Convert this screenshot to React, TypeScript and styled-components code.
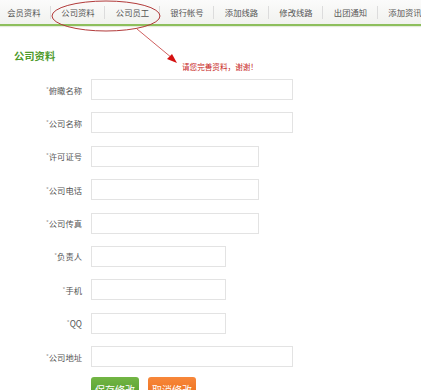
import styled, { createGlobalStyle } from "styled-components";

// Seitenbasis
const GlobalStyle = createGlobalStyle`
  html, body {
    margin: 0;
    padding: 0;
    background: #ffffff;
    font-family: "Noto Sans CJK SC", "Liberation Sans", sans-serif;
  }
`;

const tabs = ["会员资料", "公司资料", "公司员工", "银行帐号", "添加线路", "修改线路", "出团通知", "添加资讯"];

interface Field {
  label: string;
  width: number;
}

const fields: Field[] = [
  { label: "俯瞰名称", width: 202 },
  { label: "公司名称", width: 202 },
  { label: "许可证号", width: 168 },
  { label: "公司电话", width: 168 },
  { label: "公司传真", width: 168 },
  { label: "负责人", width: 135 },
  { label: "手机", width: 135 },
  { label: "QQ", width: 135 },
  { label: "公司地址", width: 202 },
];

const App = () => {
  return (
    <>
      <GlobalStyle />
      <Page>
        <NavBar>
          {tabs.map((t, i) => (
            <Tab key={t} first={i === 0}>
              {t}
            </Tab>
          ))}
        </NavBar>

        <Heading>公司资料</Heading>

        <Form>
          {fields.map((f) => (
            <Row key={f.label}>
              <Label>
                <Star>*</Star>
                {f.label}
              </Label>
              <Input w={f.width} />
            </Row>
          ))}
          <Row>
            <span />
            <Buttons>
              <Button tone="green">保存修改</Button>
              <Button tone="orange">取消修改</Button>
            </Buttons>
          </Row>
        </Form>

        {/* Markierung: Ellipse um die Tabs und Pfeil zum Hinweis */}
        <Marker width="421" height="80" viewBox="0 0 421 80">
          <ellipse cx="106" cy="16" rx="54" ry="15" fill="none" stroke="#b23a3a" strokeWidth="1" />
          <line x1="137" y1="29" x2="172" y2="58" stroke="#d06060" strokeWidth="1" />
          <polygon points="177,63 167,59 172,54" fill="#d41010" />
        </Marker>
        <Hint>请您完善资料，谢谢！</Hint>
      </Page>
    </>
  );
};

const Page = styled.div`
  position: relative;
  width: 421px;
  height: 390px;
  overflow: hidden;
`;

const NavBar = styled.div`
  display: flex;
  height: 24px;
  background: linear-gradient(#fbfbfb, #f1f2ef);
  border-bottom: 2px solid #8dbf5c;
  box-shadow: 0 1px 1px #e4ebdc;
`;

const Tab = styled.div<{ first?: boolean }>`
  flex: none;
  width: ${(p) => (p.first ? "50.7px" : "54.5px")};
  display: flex;
  align-items: center;
  justify-content: center;
  padding-right: ${(p) => (p.first ? "3px" : "0")};
  box-sizing: border-box;
  font-size: 8.3px;
  color: #555;
  position: relative;

  &::after {
    content: "";
    position: absolute;
    right: 0;
    top: 6px;
    bottom: 5px;
    width: 1px;
    background: #dcdcdc;
  }
`;

const Heading = styled.div`
  margin: 24px 0 0 14px;
  height: 12px;
  line-height: 12px;
  font-size: 10.3px;
  font-weight: bold;
  color: #4d9a2c;
`;

const Form = styled.div`
  display: flex;
  flex-direction: column;
  gap: 12.4px;
  margin-top: 17px;
`;

const Row = styled.div`
  display: grid;
  grid-template-columns: 82px auto;
  column-gap: 9px;
  align-items: center;
`;

const Label = styled.div`
  text-align: right;
  font-size: 8.3px;
  color: #555;
`;

const Star = styled.span`
  font-size: 6px;
  color: #999;
  vertical-align: 2px;
`;

const Input = styled.div<{ w: number }>`
  width: ${(p) => p.w}px;
  height: 21px;
  box-sizing: border-box;
  border: 1px solid #e3e3e3;
  background: #fff;
`;

const Buttons = styled.div`
  display: flex;
  gap: 9px;
  margin-top: -3px;
`;

const Button = styled.div<{ tone: "green" | "orange" }>`
  width: 48px;
  height: 25px;
  border-radius: 3px;
  display: flex;
  align-items: center;
  justify-content: center;
  color: #fff;
  font-size: 10px;
  background: ${(p) =>
    p.tone === "green"
      ? "linear-gradient(#72b544, #4f9a2a)"
      : "linear-gradient(#f7873a, #ec6a17)"};
`;

const Marker = styled.svg`
  position: absolute;
  left: 0;
  top: 0;
  pointer-events: none;
`;

const Hint = styled.div`
  position: absolute;
  left: 182px;
  top: 61px;
  font-size: 7.6px;
  color: #c81f1f;
`;

export default App;
